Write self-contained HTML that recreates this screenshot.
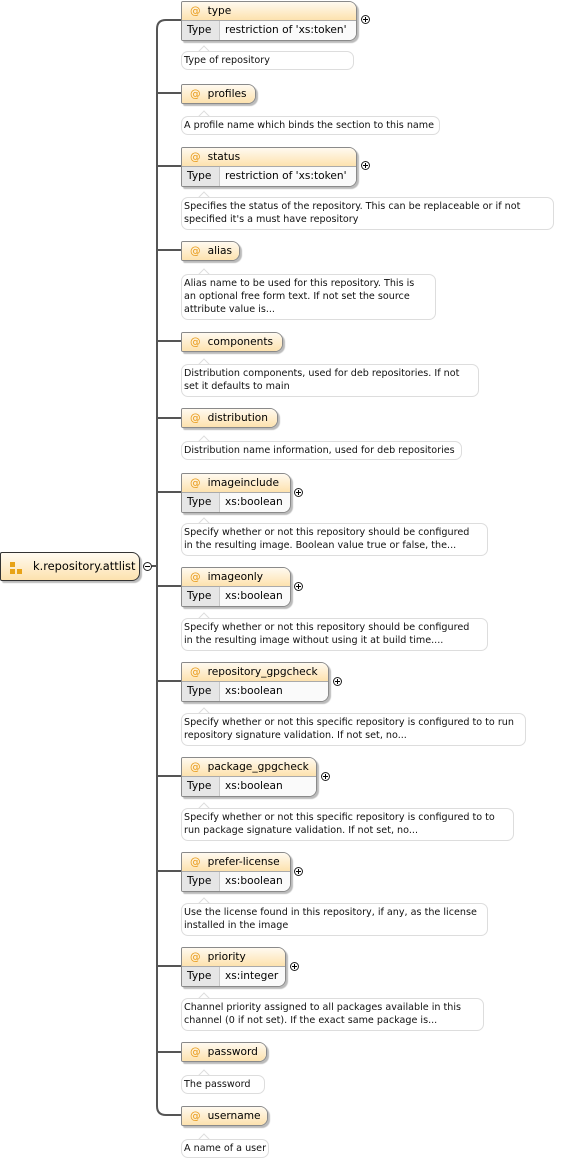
<!DOCTYPE html>
<html><head><meta charset="utf-8"><style>
body{margin:0;width:562px;height:1162px;background:#fff;position:relative;overflow:hidden;font-family:"DejaVu Sans","Liberation Sans",sans-serif;font-size:10.6px;color:#000}
.n{position:absolute;left:181px;border:1px solid #8a8a8a;border-radius:2px 8px 8px 2px;box-shadow:2px 2px 1px #bbb;background:#fff;overflow:hidden;box-sizing:border-box}
.h{height:18px;line-height:18px;background:linear-gradient(#fffaf0,#fde2ae);white-space:nowrap}
.h b{font-weight:normal;color:#e89a1a;margin-left:8px;margin-right:7px}
.t{height:19px;line-height:18px;border-top:1px solid #aaa;background:#fafafa;white-space:nowrap;display:flex}
.t .k{width:38px;background:#e6e6e6;border-right:1px solid #c8c8c8;padding-left:5px;box-sizing:border-box}
.t .v{padding-left:5px}
.d{position:absolute;left:181px;border:1px solid #ddd;border-radius:7px;background:#fff;padding:2px 2px 0;line-height:13px;box-sizing:border-box;white-space:nowrap;color:#111;font-size:9.6px}
.d:before{content:"";position:absolute;left:18px;top:-5px;width:7px;height:7px;background:#fff;border-left:1px solid #ddd;border-top:1px solid #ddd;transform:rotate(45deg);z-index:-1}
.p{position:absolute;width:9px;height:9px;border:1px solid #222;border-radius:50%;box-sizing:border-box;background:#fff}
.p:before{content:"";position:absolute;left:1px;top:3px;width:5px;height:1px;background:#000}
.p.plus:after{content:"";position:absolute;left:3px;top:1px;width:1px;height:5px;background:#000}
</style></head><body>
<svg width="562" height="1162" style="position:absolute;left:0;top:0">
<g stroke="#555" stroke-width="2" fill="none">
<path d="M181 20 H166 Q157 20 157 29 V1106 Q157 1115 166 1115 H181"/>
<path d="M157 93H181M157 166H181M157 250H181M157 341H181M157 418H181M157 492H181M157 586H181M157 681H181M157 776H181M157 871H181M157 966H181M157 1052H181M152 566H157"/>
</g></svg>

<div class="n" style="top:552px;left:0;width:140px;height:29px;border-color:#333;border-radius:2px 8px 8px 2px;background:linear-gradient(#fffaf0,#fde2ae)">
<div style="position:absolute;left:9px;top:9px;width:5px;height:5px;background:#e8a317"></div>
<div style="position:absolute;left:9px;top:16px;width:5px;height:5px;background:#e8a317"></div>
<div style="position:absolute;left:16px;top:16px;width:5px;height:5px;background:#e8a317"></div>
<div style="position:absolute;left:32px;top:0;line-height:27px;font-size:11.4px">k.repository.attlist</div></div>
<div class="p" style="left:143px;top:562px"></div>

<div class="n" style="top:1px;width:176px"><div class="h"><b>@</b>type</div><div class="t"><div class="k">Type</div><div class="v">restriction of 'xs:token'</div></div></div>
<div class="p plus" style="left:361px;top:15px"></div>
<div class="d" style="top:51px;width:173px;height:19px">Type of repository</div>

<div class="n" style="top:84px;width:75px"><div class="h"><b>@</b>profiles</div></div>
<div class="d" style="top:116px;width:259px;height:19px">A profile name which binds the section to this name</div>

<div class="n" style="top:147px;width:176px"><div class="h"><b>@</b>status</div><div class="t"><div class="k">Type</div><div class="v">restriction of 'xs:token'</div></div></div>
<div class="p plus" style="left:361px;top:161px"></div>
<div class="d" style="top:197px;width:373px;height:33px">Specifies the status of the repository. This can be replaceable or if not<br>specified it's a must have repository</div>

<div class="n" style="top:241px;width:59px"><div class="h"><b>@</b>alias</div></div>
<div class="d" style="top:274px;width:255px;height:46px">Alias name to be used for this repository. This is<br>an optional free form text. If not set the source<br>attribute value is...</div>

<div class="n" style="top:332px;width:102px"><div class="h"><b>@</b>components</div></div>
<div class="d" style="top:364px;width:298px;height:33px">Distribution components, used for deb repositories. If not<br>set it defaults to main</div>

<div class="n" style="top:408px;width:97px"><div class="h"><b>@</b>distribution</div></div>
<div class="d" style="top:441px;width:281px;height:19px">Distribution name information, used for deb repositories</div>

<div class="n" style="top:473px;width:110px"><div class="h"><b>@</b>imageinclude</div><div class="t"><div class="k">Type</div><div class="v">xs:boolean</div></div></div>
<div class="p plus" style="left:294px;top:488px"></div>
<div class="d" style="top:523px;width:307px;height:33px">Specify whether or not this repository should be configured<br>in the resulting image. Boolean value true or false, the...</div>

<div class="n" style="top:567px;width:110px"><div class="h"><b>@</b>imageonly</div><div class="t"><div class="k">Type</div><div class="v">xs:boolean</div></div></div>
<div class="p plus" style="left:294px;top:582px"></div>
<div class="d" style="top:618px;width:307px;height:33px">Specify whether or not this repository should be configured<br>in the resulting image without using it at build time....</div>

<div class="n" style="top:662px;width:148px"><div class="h"><b>@</b>repository_gpgcheck</div><div class="t"><div class="k">Type</div><div class="v">xs:boolean</div></div></div>
<div class="p plus" style="left:333px;top:677px"></div>
<div class="d" style="top:713px;width:345px;height:33px">Specify whether or not this specific repository is configured to to run<br>repository signature validation. If not set, no...</div>

<div class="n" style="top:757px;width:136px"><div class="h"><b>@</b>package_gpgcheck</div><div class="t"><div class="k">Type</div><div class="v">xs:boolean</div></div></div>
<div class="p plus" style="left:321px;top:772px"></div>
<div class="d" style="top:808px;width:333px;height:33px">Specify whether or not this specific repository is configured to to<br>run package signature validation. If not set, no...</div>

<div class="n" style="top:852px;width:110px"><div class="h"><b>@</b>prefer-license</div><div class="t"><div class="k">Type</div><div class="v">xs:boolean</div></div></div>
<div class="p plus" style="left:294px;top:867px"></div>
<div class="d" style="top:903px;width:307px;height:33px">Use the license found in this repository, if any, as the license<br>installed in the image</div>

<div class="n" style="top:947px;width:105px"><div class="h"><b>@</b>priority</div><div class="t"><div class="k">Type</div><div class="v">xs:integer</div></div></div>
<div class="p plus" style="left:290px;top:962px"></div>
<div class="d" style="top:998px;width:303px;height:33px">Channel priority assigned to all packages available in this<br>channel (0 if not set). If the exact same package is...</div>

<div class="n" style="top:1042px;width:86px"><div class="h"><b>@</b>password</div></div>
<div class="d" style="top:1075px;width:84px;height:19px">The password</div>

<div class="n" style="top:1106px;width:87px"><div class="h"><b>@</b>username</div></div>
<div class="d" style="top:1139px;width:88px;height:19px">A name of a user</div>
</body></html>
